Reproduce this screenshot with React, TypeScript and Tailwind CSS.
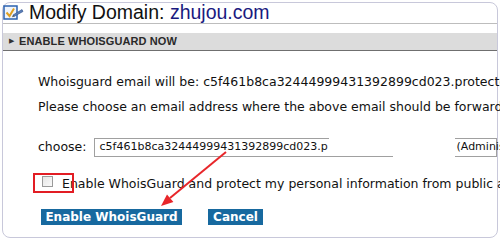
import React from "react";

const verdana = "font-['DejaVu_Sans','Verdana',sans-serif]";

function TitleIcon() {
  return (
    <svg width="21" height="18" viewBox="0 0 21 18" className="shrink-0">
      <rect x="1" y="2" width="13" height="13" fill="#eef4fc" stroke="#2b62b0" strokeWidth="1.5" />
      <path d="M3.5 8.5 L6.5 12 L11 4.5" fill="none" stroke="#e0a020" strokeWidth="2" />
      <path d="M10 11 L19 5.5 L20 7.5 L11 12.5 Z" fill="#5b7fb8" stroke="#2b4f8a" strokeWidth="0.6" />
      <path d="M10 11 L9.2 13.2 L11 12.5 Z" fill="#333" />
    </svg>
  );
}

export default function App() {
  return (
    <div className="w-[500px] h-[240px] bg-white overflow-hidden relative p-[2px] font-['Liberation_Sans',Arial,sans-serif]">
      {/* Panel */}
      <div className="h-[236px] border border-[#c8c8da] rounded-[8px]">
        {/* Title */}
        <div className="h-[21px] flex items-center border-b border-[#bdbdbd]">
          <TitleIcon />
          <span className="ml-[5px] text-[19.5px] leading-none text-[#111] whitespace-nowrap">
            Modify Domain: <span className="text-[#1a1a80]">zhujou.com</span>
          </span>
        </div>

        {/* Section bar */}
        <div className="mt-[9px] h-[18px] bg-[#dcdcdc] border-b border-[#6f6f6f] flex items-center pl-[6px]">
          <span className="text-[7px] text-[#333] mr-[5px]">▶</span>
          <span className="text-[11px] font-bold text-[#2a2a2a] tracking-[0.1px]">ENABLE WHOISGUARD NOW</span>
        </div>

        {/* Body */}
        <div className={`pl-[35px] mt-[18px] text-[12.5px] text-[#111] ${verdana}`}>
          <div className="leading-[25px] whitespace-nowrap">
            Whoisguard email will be: c5f461b8ca32444999431392899cd023.protect@whoisguard.com
          </div>
          <div className="leading-[25px] whitespace-nowrap">
            Please choose an email address where the above email should be forwarded:
          </div>

          <div className="mt-[19px] flex items-center h-[19px] whitespace-nowrap">
            <span>choose:</span>
            <div className="relative ml-[7px] w-[440px] h-[19px] border border-[#a0a0a0] flex items-center pl-[5px] text-[11px]">
              <span>c5f461b8ca32444999431392899cd023.p</span>
              <div className="absolute left-[234px] top-[-1px] w-[126px] h-[18px] bg-white" />
              <div className="absolute left-[298px] bottom-[-1px] w-[62px] h-[2px] bg-white" />
              <span className="absolute left-[362px]">(Administrative Contact)</span>
            </div>
          </div>

          <div className="relative mt-[20px] flex items-start h-[13px] whitespace-nowrap">
            <span className="mt-[-1px] ml-[4px] w-[11px] h-[11px] border border-[#9a9a9a] bg-gradient-to-br from-[#e6e6e6] to-[#fafafa] shrink-0" />
            <span className="ml-[9px] leading-[13px]">
              Enable WhoisGuard and protect my personal information from public access
            </span>
            <div className="absolute left-[-5px] top-[-4px] w-[41px] h-[20px] border-2 border-[#e21d24]" />
          </div>

          <div className="mt-[19px] ml-[3px] flex gap-[26px]">
            <button className="w-[141px] h-[16px] bg-[#17699f] text-white text-[12px] font-bold leading-[16px] text-center">
              Enable WhoisGuard
            </button>
            <button className="w-[55px] h-[16px] bg-[#17699f] text-white text-[12px] font-bold leading-[16px] text-center">
              Cancel
            </button>
          </div>
        </div>
      </div>

      {/* Red annotation arrow */}
      <svg className="absolute left-0 top-0 pointer-events-none" width="500" height="240">
        <line x1="226" y1="152" x2="170" y2="198" stroke="#e8262a" strokeWidth="2" />
        <polygon points="161,206 173.4,202.1 167,194.5" fill="#e8262a" />
      </svg>
    </div>
  );
}
